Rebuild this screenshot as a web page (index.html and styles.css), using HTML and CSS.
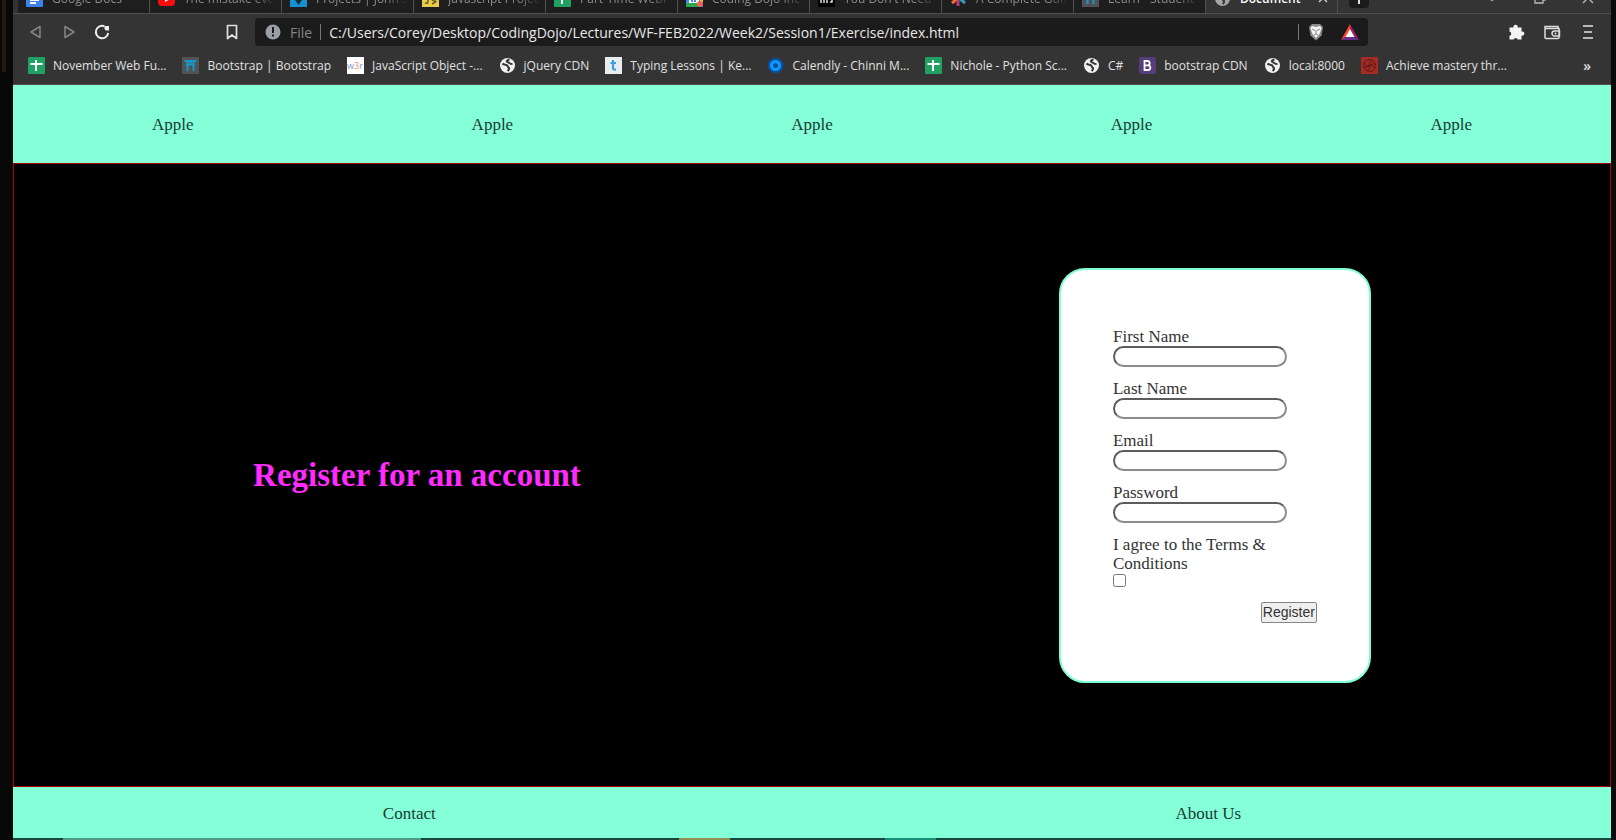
FILE: index.html
```html
<!DOCTYPE html>
<html lang="en">
<head>
<meta charset="utf-8">
<title>Document</title>
<link rel="stylesheet" href="styles.css">
</head>
<body>
<svg class="defs" aria-hidden="true">
  <symbol id="sheet" viewBox="0 0 17 17"><rect width="17" height="17" rx="1" fill="#1fa261"/><path d="M8 3v11M2.500 7h12" stroke="#fff" stroke-width="2"/></symbol>
  <symbol id="globe" viewBox="0 0 17 17"><circle cx="8.500" cy="8.500" r="7.500" fill="#f1f1f1"/><path d="M3.500 6.500c1.500 1.800 3 .8 4.500 1.800 1.200 1 .3 1.700 1.500 2.200 1.200.6.500 2-.8 3.500M10.500 2.500c-3 .8-3.500 2-1.500 2.800 2 .7 2 2 4.500 1.700" fill="none" stroke="#383838" stroke-width="2"/></symbol>
  <symbol id="torii" viewBox="0 0 17 17"><rect width="17" height="17" fill="#505255"/><path d="M2.500 4h12M4 7.500h9M5.500 4v10M11.500 4v10M8.500 4v3" fill="none" stroke="#1798c4" stroke-width="2"/></symbol>
</svg>
<div class="edge edge-left"></div>
<div class="window">
  <header class="chrome">
    <div class="tabs">
      <button class="tab"><svg viewBox="0 0 17 17"><rect width="17" height="17" rx="1" fill="#3b82f0"/><path d="M4 10h9M4 13h6" stroke="#fff" stroke-width="2"/></svg><span>Google Docs</span></button>
      <button class="tab"><svg viewBox="0 0 17 17"><rect y="2" width="17" height="14" rx="4" fill="#f80c0c"/><path d="M7 6v6l5-3z" fill="#fff"/></svg><span>The mistake every</span></button>
      <button class="tab"><svg viewBox="0 0 17 17"><rect width="17" height="17" fill="#1790cf"/><path d="M5 10h7l-3.500 5z" fill="#102c3d"/></svg><span>Projects | John S</span></button>
      <button class="tab"><svg viewBox="0 0 17 17"><rect width="17" height="17" fill="#e8cd4f"/><path d="M6 7v5q0 2-3 1M14 8q-4-1-4 1t3 2-3 3" fill="none" stroke="#665c24" stroke-width="1.500"/></svg><span>Javascript Project</span></button>
      <button class="tab"><svg><use href="#sheet"/></svg><span>Part-Time WebFu</span></button>
      <button class="tab"><svg viewBox="0 0 17 17"><rect width="17" height="17" fill="#4285f4"/><rect x="3" y="3" width="10" height="10" fill="#fff"/><path d="M0 13h12v4H0z" fill="#2da94f"/><path d="M14 0h3v12h-3z" fill="#f5bd1f"/><path d="M5 11h2M9 8v4" stroke="#4285f4" stroke-width="2"/><circle cx="14" cy="14" r="3" fill="#ee6055"/></svg><span>Coding Dojo Inc.</span></button>
      <button class="tab"><svg viewBox="0 0 17 17"><rect width="17" height="17" fill="#000"/><path d="M3 6v7M6 6v7M9 6v7M12 6h2v6h-2" stroke="#ddd" stroke-width="1.500" fill="none"/></svg><span>You Don't Need</span></button>
      <button class="tab"><svg viewBox="0 0 17 17"><path d="M8 8 2 4M8 8l-6 5" stroke="#f36d35" stroke-width="3"/><path d="M8 8v8M8 8V1" stroke="#b83d7a" stroke-width="3"/><path d="m9 8 6 5M9 8l6-4" stroke="#2d9fb0" stroke-width="3"/></svg><span>A Complete Guide</span></button>
      <button class="tab"><svg><use href="#torii"/></svg><span>Learn - Student</span></button>
      <button class="tab active"><svg class="dim"><use href="#globe"/></svg><span>Document</span><svg class="close" viewBox="0 0 12 12"><path d="m2 2 8 8M10 2l-8 8" stroke="#ccc" stroke-width="1.500"/></svg></button>
      <button class="newtab" aria-label="New tab"><svg viewBox="0 0 20 20"><path d="M10 4v12M4 10h12" stroke="#ddd" stroke-width="2"/></svg></button>
      <div class="wincontrols">
        <svg viewBox="0 0 14 14"><path d="M2 6l5 4 5-4" fill="none" stroke="#aaa"/></svg>
        <svg viewBox="0 0 14 14"><path d="M2 4h8v8H2zM5 4V1h7v8h-2" fill="none" stroke="#bbb" stroke-width="1.300"/></svg>
        <svg viewBox="0 0 14 14"><path d="m2 2 10 10M12 2 2 12" stroke="#bbb" stroke-width="1.300"/></svg>
      </div>
    </div>
    <div class="toolbar">
      <div class="navbuttons">
        <button aria-label="Back"><svg viewBox="0 0 18 18"><path d="M13 3.500v11L4 9z" fill="none" stroke="#858585" stroke-width="1.500" stroke-linejoin="round"/></svg></button>
        <button aria-label="Forward"><svg viewBox="0 0 18 18"><path d="M5 3.500v11L14 9z" fill="none" stroke="#858585" stroke-width="1.500" stroke-linejoin="round"/></svg></button>
        <button aria-label="Reload"><svg viewBox="0 0 18 18"><path d="M11.500 3.300A6.200 6.200 0 1 0 15.200 10" fill="none" stroke="#eee" stroke-width="1.900"/><path d="M11.500 3h4.500v4.500h-2.500a2 2 0 0 1-2-2z" fill="#eee"/></svg></button>
      </div>
      <button aria-label="Bookmark"><svg viewBox="0 0 18 18"><path d="M4.500 2.500h9v13L9 12l-4.500 3.500z" fill="none" stroke="#e0e0e0" stroke-width="1.700" stroke-linejoin="round"/></svg></button>
      <div class="address">
        <svg viewBox="0 0 18 18"><circle cx="9" cy="9" r="7.500" fill="#9a9fa5"/><path d="M9 4v6M9 11.500v2" stroke="#1b1b1b" stroke-width="2"/></svg>
        <label for="url">File</label>
        <i class="rule"></i>
        <input id="url" type="text" value="C:/Users/Corey/Desktop/CodingDojo/Lectures/WF-FEB2022/Week2/Session1/Exercise/index.html">
        <i class="rule"></i>
        <button aria-label="Shields"><svg viewBox="0 0 18 18"><path d="M5 1h8l3 3-1.500 8.500L9 17.500l-5.500-5L2 4z" fill="#8d8d8d"/><path d="m5 3 4 1 4-1 1.500 2-2 6L9 15l-3.500-4-2-6z" fill="#f4f4f4"/><path d="m5 6 3 1.500M13 6l-3 1.500M9 7v4l-2 1M9 11l2 1" stroke="#888" fill="none"/></svg></button>
        <button aria-label="Rewards"><svg viewBox="0 0 18 18"><path d="M9 1v6l-4 7-5 3z" fill="#ff4724"/><path d="M9 1v6l4 7 5 3z" fill="#9e1f63"/><path d="m0 17 5-3.500h8l5 3.500z" fill="#662d91"/><path d="m9 6 4.500 8h-9z" fill="#fff"/></svg></button>
      </div>
      <div class="tools">
        <button aria-label="Extensions"><svg viewBox="0 0 18 18"><path d="M3 4.500h3.500a2.200 2.200 0 1 1 4.200 0h3.800v4a2.200 2.200 0 1 1 0 4.200v3.800h-3.700a2.200 2.200 0 0 0-4.200 0H2.500v-3.700a2.200 2.200 0 0 0 0-4.300V4.500z" fill="#f4f4f4"/></svg></button>
        <button aria-label="Wallet"><svg viewBox="0 0 18 18"><path d="M15 5.500V3.500H2v11q0 1 1 1h12q1 0 1-1v-9H2M16.500 8h-5a2.500 2.500 0 0 0 0 5h5z" fill="none" stroke="#dcdcdc" stroke-width="1.500"/><circle cx="12.500" cy="10.500" r="1" fill="#ddd"/></svg></button>
        <button aria-label="Menu"><svg viewBox="0 0 18 18"><path d="M4 3h10M5 9h8M4 15h10" stroke="#e4e4e4" stroke-width="1.500"/></svg></button>
      </div>
    </div>
    <nav class="bookmarks" aria-label="Bookmarks">
      <a href="#"><svg><use href="#sheet"/></svg>November Web Fu...</a>
      <a href="#"><svg><use href="#torii"/></svg>Bootstrap | Bootstrap</a>
      <a href="#"><svg viewBox="0 0 17 17"><rect width="17" height="17" fill="#fff"/><text x="0" y="12" class="w3" fill="#7c9bc8">w<tspan fill="#f18a64">3</tspan>r</text></svg>JavaScript Object -...</a>
      <a href="#"><svg><use href="#globe"/></svg>jQuery CDN</a>
      <a href="#"><svg viewBox="0 0 17 17"><rect width="17" height="17" fill="#e9edf0"/><path d="M8 3v8q0 2 3 1.500M5.500 6H11" fill="none" stroke="#3ba0dd" stroke-width="2.200"/></svg>Typing Lessons | Ke...</a>
      <a href="#"><svg viewBox="0 0 17 17"><circle cx="8.500" cy="8.500" r="7.800" fill="#0b4f9c"/><circle cx="8.500" cy="8.500" r="4" fill="none" stroke="#0a9dff" stroke-width="3"/><path d="M8 8.500h3" stroke="#0b4f9c" stroke-width="2"/></svg>Calendly - Chinni M...</a>
      <a href="#"><svg><use href="#sheet"/></svg>Nichole - Python Sc...</a>
      <a href="#"><svg><use href="#globe"/></svg>C#</a>
      <a href="#"><svg viewBox="0 0 17 17"><rect width="17" height="17" rx="2" fill="#563d7c"/><path d="M5.500 4h3.500a2.200 2.200 0 0 1 0 4.300H5.500zM5.500 8.300h4a2.400 2.400 0 0 1 0 4.700h-4z" fill="none" stroke="#fff" stroke-width="1.800"/></svg>bootstrap CDN</a>
      <a href="#"><svg><use href="#globe"/></svg>local:8000</a>
      <a href="#"><svg viewBox="0 0 17 17"><rect width="17" height="17" fill="#a42c25"/><g fill="none" stroke="#5e1815"><circle cx="8.500" cy="8.500" r="6"/><path d="M8.500 8.500q-1-4 3-5M8.500 8.500q4-1 5 3M8.500 8.500q1 4-3 5M8.500 8.500q-4 1-5-3M8.500 8.500q3-3 6-1M8.500 8.500q-3 3-6 1"/></g></svg>Achieve mastery thr...</a>
      <button class="more" aria-label="More bookmarks">»</button>
    </nav>
  </header>
  <nav class="topnav">
    <a href="#">Apple</a><a href="#">Apple</a><a href="#">Apple</a><a href="#">Apple</a><a href="#">Apple</a>
  </nav>
  <main class="main">
    <h1>Register for an account</h1>
    <form class="card">
      <div class="field"><label for="first">First Name</label><input id="first" type="text"></div>
      <div class="field"><label for="last">Last Name</label><input id="last" type="text"></div>
      <div class="field"><label for="email">Email</label><input id="email" type="email"></div>
      <div class="field"><label for="password">Password</label><input id="password" type="password"></div>
      <div class="field"><label for="terms">I agree to the Terms &amp; Conditions</label><input id="terms" type="checkbox"></div>
      <button class="submit" type="button">Register</button>
    </form>
  </main>
  <footer class="footer"><a href="#">Contact</a><a href="#">About Us</a></footer>
  <div class="taskbar"></div>
</div>
<div class="edge edge-right"></div>
</body>
</html>
```
FILE: styles.css
```css
* { box-sizing: border-box; }

body {
  margin: 0;
  min-height: 100vh;
  display: flex;
  background: #0a0a0a;
  font-family: "Liberation Serif", serif;
  font-size: 17px;
  line-height: 19px;
}

a { color: inherit; text-decoration: none; }
.defs { position: absolute; width: 0; height: 0; }

.edge-left {
  flex: 0 0 13px;
  background: linear-gradient(#24190b, #24190b) 2px 0 / 4px 72px no-repeat, #080808;
}
.edge-right { flex: 0 0 5px; background: #0a0a0a; }

.window {
  flex: 1;
  min-width: 0;
  display: flex;
  flex-direction: column;
}

/* Browser chrome */
.chrome {
  background: #343434;
  color: #e0e0e0;
  font-family: "Open Sans", sans-serif;
  font-size: 12px;
  border-bottom: 1px solid #505050;
}
.chrome button {
  display: flex;
  align-items: center;
  border: 0;
  padding: 0;
  background: none;
  color: inherit;
  font: inherit;
}
.chrome svg { flex: none; width: 18px; height: 18px; }

.tabs {
  display: flex;
  align-items: flex-end;
  height: 14px;
  padding-left: 5px;
  overflow: hidden;
  border-bottom: 1px solid #505050;
}
.chrome .tab {
  flex: 0 1 132px;
  min-width: 0;
  height: 30px;
  gap: 9px;
  padding: 0 4px 0 8px;
  background: #1e1e1e;
  color: #8c8c8c;
  border-right: 1px solid #505050;
}
.tab svg, .bookmarks svg { width: 17px; height: 17px; }
.tab span {
  flex: 1;
  overflow: hidden;
  white-space: nowrap;
  text-align: left;
  mask-image: linear-gradient(90deg, #000 75%, transparent);
}
.chrome .active { padding-right: 8px; background: #343434; color: #fff; font-weight: 600; }
.active span { mask-image: none; }
.dim { opacity: 0.6; }
.chrome .close { width: 12px; height: 12px; }
.chrome .newtab {
  margin: 0 0 5px 11px;
  height: 20px;
  background: #1b1b1b;
  border-radius: 4px;
}
.chrome .newtab svg { width: 20px; height: 20px; }
.wincontrols {
  flex: 1;
  display: flex;
  justify-content: flex-end;
  gap: 34px;
  padding: 0 16px 8px 0;
}
.wincontrols svg { width: 14px; height: 14px; }

.toolbar {
  display: flex;
  align-items: center;
  height: 36px;
  padding: 0 14px;
}
.navbuttons { display: flex; gap: 15px; flex: 0 0 196px; }
.address {
  flex: 0 1 1113px;
  display: flex;
  align-items: center;
  gap: 8px;
  height: 28px;
  margin-left: 14px;
  padding: 0 9px;
  background: #1b1b1b;
  border-radius: 4px;
  font-size: 14px;
}
.address label { color: #858585; }
.address input {
  flex: 1;
  min-width: 0;
  border: 0;
  padding: 0;
  background: none;
  color: #e8e8e8;
  font: inherit;
}
.address button + button { margin-left: 8px; }
.rule { width: 1px; height: 16px; background: #777; }
.tools { display: flex; gap: 18px; margin-left: auto; }

.bookmarks {
  display: flex;
  align-items: center;
  gap: 16px;
  height: 34px;
  padding: 0 20px 4px 15px;
  white-space: nowrap;
}
.bookmarks a { display: flex; align-items: center; gap: 8px; }
.chrome .more { margin-left: auto; font-size: 14px; font-weight: 600; }
.w3 { font-size: 9px; }

/* Page */
.topnav, .footer {
  display: flex;
  justify-content: space-around;
  align-items: center;
  background: #84ffd8;
  color: #173c32;
}
.topnav { padding: 30px 0 29px; }
.footer { padding: 17px 0 15px; }

.main {
  flex: 1;
  display: flex;
  justify-content: space-around;
  align-items: center;
  background: #000;
  border: 1px solid #a80000;
}
h1 {
  margin: 0;
  color: #ff2bff;
  font-size: 33px;
  line-height: 38px;
}

.card {
  display: flex;
  flex-direction: column;
  gap: 12px;
  width: 312px;
  padding: 57px 52px 58px;
  background: #fff;
  border: 2px solid #7fffd4;
  border-radius: 26px;
  color: #333;
}
.field { display: flex; flex-direction: column; align-items: flex-start; }
.field input {
  width: 174px;
  height: 21px;
  margin: 0;
  border: 2px solid;
  border-color: #5c5c5c #8c8c8c #8c8c8c #5c5c5c;
  border-radius: 11px;
}
.field input[type="checkbox"] { width: 13px; height: 13px; margin: 1px 0 3px; }
.submit {
  align-self: flex-end;
  height: 21px;
  padding: 0 1px;
  border: 1px solid #858585;
  border-radius: 2px;
  background: #efefef;
  color: #333;
  font: 14px/19px "Liberation Sans", sans-serif;
}

.taskbar {
  height: 2px;
  background:
    linear-gradient(#4f9984, #4f9984) 50px 0 / 358px 2px no-repeat,
    linear-gradient(#8e9150, #8e9150) 666px 0 / 51px 2px no-repeat,
    linear-gradient(#198f79, #198f79) 872px 0 / 51px 2px no-repeat,
    #17483d;
}
```
